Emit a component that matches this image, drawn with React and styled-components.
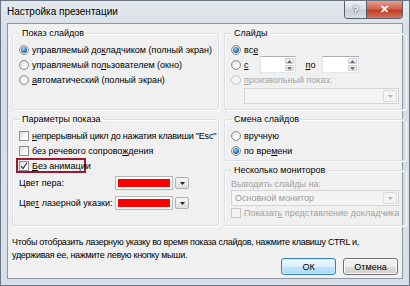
import React from 'react';
import styled, { createGlobalStyle, css } from 'styled-components';

const Global = createGlobalStyle`
  html, body { margin: 0; padding: 0; background: #fff; }
  body { font-family: "Liberation Sans", Arial, sans-serif; }
`;

const Window = styled.div`
  width: 410px;
  height: 286px;
  box-sizing: border-box;
  display: flex;
  flex-direction: column;
  border: 1px solid #6b7684;
  background: linear-gradient(#e4e9ef, #d6dde6 40px, #d9dfe6);
  overflow: hidden;
`;

const TitleBar = styled.div`
  height: 22px;
  display: flex;
  align-items: flex-start;
  padding-left: 6px;
  padding-right: 6px;
`;

const Title = styled.div`
  flex: 1;
  font-size: 10px;
  line-height: 22px;
  color: #000;
`;

const Caption = styled.div`
  display: flex;
  height: 17px;
  border: 1px solid #58606c;
  border-top: none;
  border-radius: 0 0 4px 4px;
  overflow: hidden;
`;

const CaptionButton = styled.div`
  display: flex;
  align-items: center;
  justify-content: center;
  width: ${p => p.$w}px;
  color: #fff;
  font-size: 11px;
  font-weight: bold;
  ${p => p.$close ? css`
    background: linear-gradient(#e7a08f, #d06450 45%, #c13c26 55%, #d2755c);
  ` : css`
    background: linear-gradient(#eef1f4, #d8dde4 45%, #c9d0d9 55%, #d9dee5);
    border-right: 1px solid #58606c;
    text-shadow: 0 0 2px #4b5563, 0 0 1px #4b5563;
  `}
`;

const Client = styled.div`
  flex: 1;
  margin: 0 6px 6px;
  border: 1px solid #8c98a6;
  background: #f0f0f0;
  padding: 4px 4px 0 4px;
  display: flex;
  flex-direction: column;
  font-size: 9px;
  color: #000;
`;

const Columns = styled.div`
  display: grid;
  grid-template-columns: 207px 1fr;
  column-gap: 5px;
`;

const Column = styled.div`
  display: flex;
  flex-direction: column;
  gap: 4px;
`;

const Group = styled.fieldset`
  margin: 0;
  padding: ${p => p.$pad || '3px 6px 0'};
  height: ${p => p.$h}px;
  box-sizing: border-box;
  border: 1px solid #d9e0e5;
  border-radius: 3px;
  box-shadow: inset 1px 1px 0 #fff, 1px 1px 0 #fff;
  min-width: 0;
`;

const Legend = styled.legend`
  padding: 0 2px;
  margin-left: 1px;
  line-height: 11px;
`;

const Row = styled.div`
  display: flex;
  align-items: center;
  height: ${p => p.$h || 15}px;
  gap: 3px;
  color: ${p => p.$disabled ? '#a3a3a3' : '#000'};
  white-space: nowrap;
`;

const Label = styled.span`
  white-space: nowrap;
  letter-spacing: ${p => p.$tight ? '-0.2px' : 'normal'};
`;

const Radio = styled.span`
  flex: none;
  width: 10px;
  height: 10px;
  box-sizing: border-box;
  border-radius: 50%;
  border: 1px solid ${p => p.$disabled ? '#c4c4c4' : '#8b8d90'};
  background: ${p => p.$disabled ? '#f2f2f2' : 'radial-gradient(circle at 60% 65%, #ffffff, #e4e4e4 70%, #cfcfcf)'};
  display: inline-flex;
  align-items: center;
  justify-content: center;
  ${p => p.$checked && css`
    &::after {
      content: '';
      width: 6px;
      height: 6px;
      border-radius: 50%;
      background: radial-gradient(circle at 40% 35%, #9fd3ff, #2f72b8 55%, #163f73);
    }
  `}
`;

const Box = styled.span`
  flex: none;
  width: 10px;
  height: 10px;
  box-sizing: border-box;
  border: 1px solid ${p => p.$disabled ? '#c6c6c6' : '#8e8f8f'};
  background: ${p => p.$disabled ? '#f4f4f4' : 'linear-gradient(135deg, #dcdcdc, #ffffff 75%)'};
  display: inline-flex;
  align-items: center;
  justify-content: center;
`;

const Highlight = styled.div`
  display: flex;
  align-items: center;
  gap: 3px;
  height: 15px;
  width: 70px;
  box-sizing: border-box;
  margin-left: -3px;
  padding-left: 1px;
  border: 2px solid #9a1830;
`;

const Field = styled.span`
  display: inline-flex;
  height: 17px;
  width: ${p => p.$w}px;
  box-sizing: border-box;
  border: 1px solid;
  border-color: #abadb3 #dbdfe6 #e3e9ef #e2e3ea;
  background: #fff;
  justify-content: flex-end;
  align-items: stretch;
  padding: 1px;
`;

const Spin = styled.span`
  width: 9px;
  display: flex;
  flex-direction: column;
  gap: 1px;
`;

const SpinHalf = styled.span`
  flex: 1;
  display: flex;
  align-items: center;
  justify-content: center;
  border: 1px solid #c9cdd2;
  border-radius: 1px;
  background: linear-gradient(#f6f6f6, #e4e4e4);
`;

const Combo = styled.div`
  display: flex;
  align-items: center;
  height: 16px;
  box-sizing: border-box;
  margin: ${p => p.$m || '0'};
  border: 1px solid #d4d4d4;
  background: #f4f4f4;
  padding-left: 3px;
  color: #9a9a9a;
`;

const ComboText = styled.span`
  flex: 1;
`;

const DropButton = styled.span`
  flex: none;
  width: 12px;
  align-self: stretch;
  margin: 1px;
  display: flex;
  align-items: center;
  justify-content: center;
  border: 1px solid ${p => p.$disabled ? '#dadada' : '#b0b0b0'};
  border-radius: 2px;
  background: ${p => p.$disabled ? '#f4f4f4' : 'linear-gradient(#f5f5f5, #dedede)'};
`;

const ColorPicker = styled.div`
  display: flex;
  height: 14px;
  width: 75px;
  gap: 1px;
`;

const Swatch = styled.span`
  flex: 1;
  border: 1px solid #b9b9b9;
  padding: 2px;
  background: #fff;
  display: flex;
`;

const SwatchFill = styled.span`
  flex: 1;
  background: #ff0000;
`;

const ColorRow = styled.div`
  display: grid;
  grid-template-columns: 96px auto;
  align-items: center;
  height: 20px;
`;

const Spacer = styled.span`
  width: ${p => p.$w}px;
  flex: none;
`;

const Hint = styled.div`
  margin-top: 10px;
  line-height: 13px;
  letter-spacing: -0.3px;
`;

const Buttons = styled.div`
  display: flex;
  justify-content: flex-end;
  gap: 7px;
  margin-top: -4px;
`;

const Button = styled.div`
  width: 55px;
  height: 17px;
  box-sizing: border-box;
  border-radius: 3px;
  display: flex;
  align-items: center;
  justify-content: center;
  ${p => p.$default ? css`
    border: 1px solid #3c7fb1;
    background: linear-gradient(#eaf6fd, #d9f0fc 50%, #bee6fd 50%, #a7d9f5);
    box-shadow: inset 0 0 0 1px #cfe9f8;
  ` : css`
    border: 1px solid #707070;
    background: linear-gradient(#f2f2f2, #ebebeb 50%, #dddddd 50%, #cfcfcf);
    box-shadow: inset 0 0 0 1px #fbfbfb;
  `}
`;

const Arrow = ({ up, color = '#444' }) => (
  <svg width="5" height="3" viewBox="0 0 5 3">
    <path d={up ? 'M0 3 L2.5 0 L5 3 Z' : 'M0 0 L5 0 L2.5 3 Z'} fill={color} />
  </svg>
);

const Check = () => (
  <svg width="8" height="8" viewBox="0 0 8 8">
    <path d="M1 4.2 L3 6.5 L7 0.8" fill="none" stroke="#1d2b3a" strokeWidth="1.1" />
  </svg>
);

const SpinBox = ({ w }) => (
  <Field $w={w}>
    <Spin>
      <SpinHalf><Arrow up color="#6d6d6d" /></SpinHalf>
      <SpinHalf><Arrow color="#6d6d6d" /></SpinHalf>
    </Spin>
  </Field>
);

const ColorDrop = () => (
  <ColorPicker>
    <Swatch><SwatchFill /></Swatch>
    <DropButton><Arrow color="#222" /></DropButton>
  </ColorPicker>
);

const DisabledDrop = () => (
  <DropButton $disabled><Arrow color="#b5b5b5" /></DropButton>
);

export default function App() {
  return (
    <>
      <Global />
      <Window>
        <TitleBar>
          <Title>Настройка презентации</Title>
          <Caption>
            <CaptionButton $w={21}>?</CaptionButton>
            <CaptionButton $w={35} $close>✕</CaptionButton>
          </Caption>
        </TitleBar>
        <Client>
          <Columns>
            <Column>
              <Group $h={82}>
                <Legend>Показ слайдов</Legend>
                <Row><Radio $checked /><Label>управляемый до<u>к</u>ладчиком (полный экран)</Label></Row>
                <Row><Radio /><Label>управляемый по<u>л</u>ьзователем (окно)</Label></Row>
                <Row><Radio /><Label><u>а</u>втоматический (полный экран)</Label></Row>
              </Group>
              <Group $h={112}>
                <Legend>Параметры показа</Legend>
                <Row><Box /><Label $tight><u>н</u>епрерывный цикл до нажатия клавиши "Esc"</Label></Row>
                <Row><Box /><Label>без речевого сопрово<u>ж</u>дения</Label></Row>
                <Row>
                  <Highlight><Box><Check /></Box><Label><u>Б</u>ез анимации</Label></Highlight>
                </Row>
                <ColorRow><Label>Цвет пера:</Label><ColorDrop /></ColorRow>
                <ColorRow><Label>Цве<u>т</u> лазерной указки:</Label><ColorDrop /></ColorRow>
              </Group>
            </Column>
            <Column>
              <Group $h={82}>
                <Legend>Слайды</Legend>
                <Row><Radio $checked /><Label>вс<u>е</u></Label></Row>
                <Row>
                  <Radio /><Label><u>с</u></Label>
                  <Spacer $w={5} />
                  <SpinBox w={36} />
                  <Spacer $w={4} />
                  <Label><u>п</u>о</Label>
                  <Spacer $w={1} />
                  <SpinBox w={37} />
                </Row>
                <Row $disabled><Radio $disabled /><Label><u>п</u>роизвольный показ:</Label></Row>
                <Combo $m="1px 0 0 13px"><ComboText /><DisabledDrop /></Combo>
              </Group>
              <Group $h={47}>
                <Legend>Смена слайдов</Legend>
                <Row><Radio /><Label>вручную</Label></Row>
                <Row><Radio $checked /><Label>по вре<u>м</u>ени</Label></Row>
              </Group>
              <Group $h={61} $pad="1px 6px 0">
                <Legend>Несколько мониторов</Legend>
                <Row $disabled $h={13}><Label>Выводить слайды на:</Label></Row>
                <Combo><ComboText>Основной монитор</ComboText><DisabledDrop /></Combo>
                <Row $disabled $h={14}><Box $disabled /><Label>Показат<u>ь</u> представление докладчика</Label></Row>
              </Group>
            </Column>
          </Columns>
          <Hint>
            Чтобы отобразить лазерную указку во время показа слайдов, нажмите клавишу CTRL и,<br />
            удерживая ее, нажмите левую кнопку мыши.
          </Hint>
          <Buttons>
            <Button $default>ОК</Button>
            <Button>Отмена</Button>
          </Buttons>
        </Client>
      </Window>
    </>
  );
}
